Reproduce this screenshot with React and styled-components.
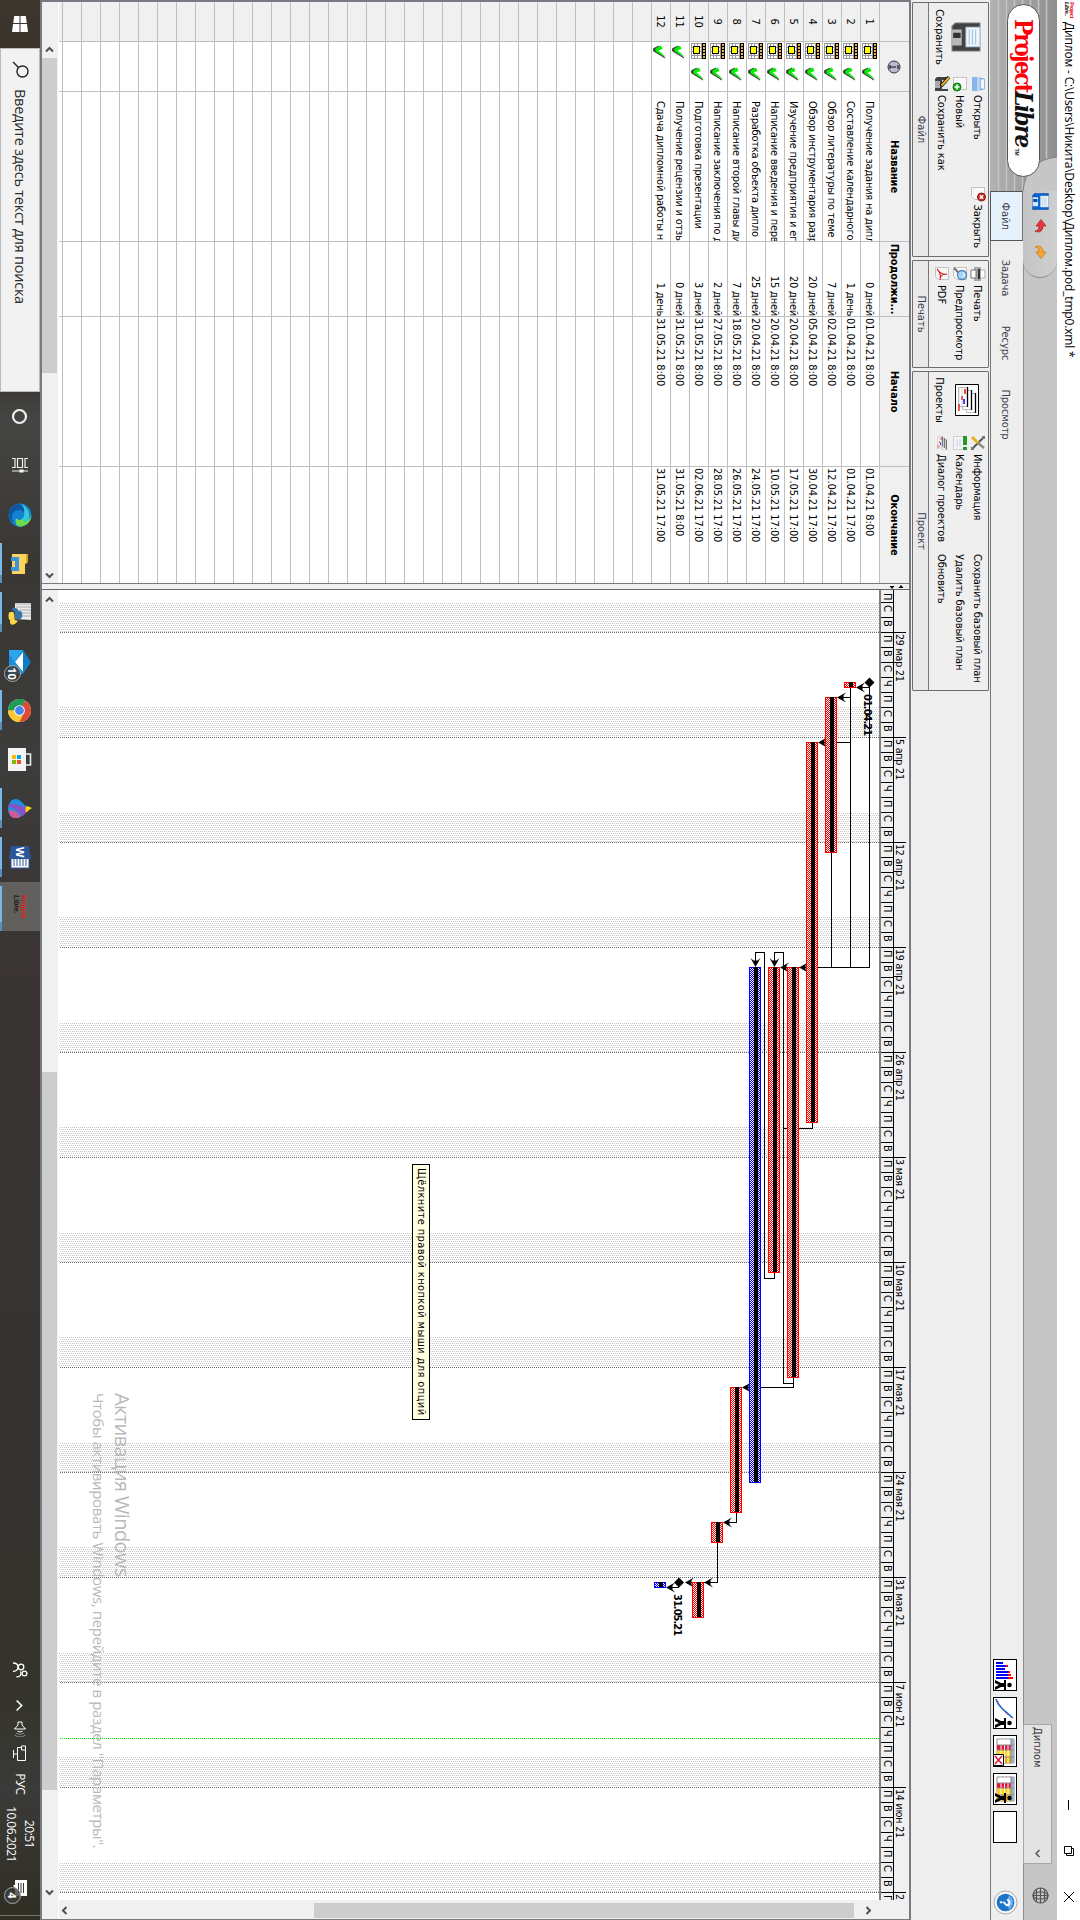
import React from "react";
import styled, { createGlobalStyle } from "styled-components";

const TAHOMA = '"DejaVu Sans Condensed", "DejaVu Sans", Tahoma, sans-serif';
const SEGOE = '"Open Sans", "Noto Sans", "Segoe UI", sans-serif';

const Global = createGlobalStyle`
  * { box-sizing: border-box; }
  html, body { margin: 0; padding: 0; background: #eeeeee; }
  svg { display: block; flex: none; }
`;

const Portrait = styled.div`
  width: 1080px;
  height: 1920px;
  overflow: hidden;
`;

const Desktop = styled.div`
  width: 1920px;
  height: 1080px;
  display: flex;
  flex-direction: column;
  overflow: hidden;
  background: #eeeeee;
  color: #000;
  font: 11px/13px ${TAHOMA};
  white-space: nowrap;
  transform-origin: 0 0;
  transform: translateX(1080px) rotate(90deg);
`;

/* ---------- window title ---------- */
const TitleBar = styled.header`
  height: 23px;
  flex: none;
  display: flex;
  align-items: center;
  padding: 0 18px 2px 2px;
  background: #fff;
`;
const TitleIcon = styled.div`
  width: 15px;
  margin-right: 5px;
  font: bold italic 5.5px/5px "Liberation Sans", sans-serif;
  letter-spacing: -0.4px;
  color: #111;
  b { color: #e00; display: block; font-style: normal; }
`;
const TitleText = styled.div`
  flex: 1;
  font: 12px/16px ${SEGOE};
  letter-spacing: -0.17px;
`;
const WindowButtons = styled.div`
  display: flex;
  gap: 36px;
  padding-top: 1px;
`;

/* ---------- header band ---------- */
const Band = styled.div`
  height: 67px;
  flex: none;
  display: flex;
`;
const LogoPanel = styled.div`
  width: 191px;
  height: 67px;
  position: relative;
  background: #c6c6c6;
`;
const LogoArt = styled.svg`
  position: absolute;
  inset: 0;
`;
const LogoPill = styled.div`
  position: absolute;
  left: 4px;
  top: 17px;
  width: 173px;
  height: 33px;
  display: flex;
  align-items: center;
  padding-left: 14px;
  border: 1px solid #555;
  border-radius: 17px;
  background: #fff;
  font: bold 24px/30px "DejaVu Serif Condensed", "DejaVu Serif", serif;
  letter-spacing: -2.05px;
  color: #111;
  b { color: #fb0207; }
  i { letter-spacing: -1.7px; }
  small { font: bold 5px/5px "Liberation Sans", sans-serif; letter-spacing: 0; align-self: flex-end; padding-bottom: 6px; margin-left: 2px; }
`;
const BandRight = styled.div`
  flex: 1;
  display: flex;
  flex-direction: column;
`;
const QuickBar = styled.div`
  height: 34px;
  display: flex;
  align-items: center;
  background: #c6c6c6;
  border-bottom: 1px solid #8d8d8d;
`;
const QuickPill = styled.div`
  width: 87px;
  height: 34px;
  display: flex;
  align-items: center;
  gap: 8px;
  padding-left: 2px;
  border-right: 1px solid #8a8a8a;
  border-radius: 0 17px 17px 0;
  background: linear-gradient(#cfcfcf, #c4c4c4);
`;
const Combo = styled.div`
  width: 140px;
  height: 29px;
  margin: 5px 23px 0 auto;
  padding: 0 5px 0 2px;
  display: flex;
  align-items: center;
  justify-content: space-between;
  border: 1px solid #a6a6ae;
  background: #e3e3e3;
  color: #333;
`;
const GlobeBox = styled.div`
  padding-right: 16px;
`;
const TabRow = styled.div`
  height: 33px;
  display: flex;
  align-items: center;
  background: #eeeeee;
  border-bottom: 1px solid #777;
`;
const Tab = styled.div`
  width: ${(p) => p.$w}px;
  height: 33px;
  display: flex;
  align-items: center;
  justify-content: center;
  padding-top: 2px;
  color: #3d4150;
  letter-spacing: -0.1px;
  border: 1px solid ${(p) => (p.$on ? "#555" : "transparent")};
  border-top-color: ${(p) => (p.$on ? "#777" : "transparent")};
  background: ${(p) => (p.$on ? "#e5f2fc" : "transparent")};
`;
const ViewButtons = styled.div`
  margin-left: auto;
  display: flex;
  align-items: center;
  gap: 6px;
  padding: 3px 5px 0 0;
`;
const ViewButton = styled.div`
  width: 32px;
  height: 24px;
  border: 1px solid #000;
  background: #fff;
`;
const HelpBox = styled.div`
  margin-left: 41px;
`;

/* ---------- ribbon ---------- */
const Ribbon = styled.div`
  height: 79px;
  flex: none;
  display: flex;
  gap: 3px;
  padding: 1px 0 1px 2px;
  background: #eeeeee;
`;
const Group = styled.section`
  width: ${(p) => p.$w}px;
  height: 77px;
  display: flex;
  flex-direction: column;
  border: 1px solid #6d6d6d;
  border-radius: 1px;
  background: #efefef;
`;
const GroupBody = styled.div`
  height: 60px;
  display: flex;
  padding-top: 1px;
  border-bottom: 1px solid #777;
`;
const GroupLabel = styled.div`
  flex: 1;
  text-align: center;
  line-height: 14px;
  color: #3d4150;
  background: #e9e9e9;
`;
const BigAction = styled.div`
  width: ${(p) => p.$w}px;
  display: flex;
  flex-direction: column;
  align-items: center;
  justify-content: space-between;
  padding: ${(p) => p.$top || 6}px 0 4px;
`;
const ActionColumn = styled.div`
  display: flex;
  flex-direction: column;
  margin-left: ${(p) => p.$ml || 0}px;
  letter-spacing: -0.1px;
`;
const Action = styled.div`
  height: 18px;
  display: flex;
  align-items: center;
  gap: 3px;
`;

/* ---------- workspace ---------- */
const Workspace = styled.main`
  height: 871px;
  flex: none;
  display: flex;
  border: solid #777a80;
  border-width: 2px 1px 2px 2px;
  background: #f0f0f0;
`;
const TablePane = styled.div`
  width: 582px;
  display: flex;
  flex-direction: column;
  border-right: 1px solid #777a80;
`;
const Splitter = styled.div`
  width: 6px;
  background: #f0f0f0;
  border-right: 1px solid #666;
`;
const Grid = styled.div`
  height: 850px;
  flex: none;
  overflow: hidden;
  background: #fff;
`;
const GridRow = styled.div`
  height: ${(p) => (p.$head ? 30 : 19)}px;
  display: grid;
  grid-template-columns: 40px 50px 150px 75px 150px 116px;
  font-weight: ${(p) => (p.$head ? "bold" : "normal")};
  text-align: ${(p) => (p.$head ? "center" : "left")};
  background: ${(p) => (p.$head ? "#f0f0f0" : "#fff")};
  letter-spacing: ${(p) => (p.$head ? "-0.15px" : "-0.1px")};
`;
const Cell = styled.div`
  overflow: hidden;
  border-right: 1px solid #bfbfbf;
  border-bottom: 1px solid #bfbfbf;
  line-height: ${(p) => (p.$head ? 29 : 18)}px;
  padding-top: ${(p) => (p.$head ? 0 : 1)}px;
  padding-left: ${(p) => p.$pl || 0}px;
  letter-spacing: ${(p) => (p.$tight ? "-0.22px" : "inherit")};
  text-align: ${(p) => p.$align || "inherit"};
  background: ${(p) => (p.$grey ? "#f0f0f0" : "transparent")};
  &:last-child { border-right: 0; }
`;
const Marks = styled(Cell)`
  display: flex;
  align-items: center;
  justify-content: ${(p) => (p.$head ? "center" : "flex-start")};
  gap: 8px;
`;
const HScroll = styled.div`
  height: 17px;
  flex: none;
  display: flex;
  align-items: center;
  background: #f0f0f0;
  border-top: 1px solid #fff;
`;
const Thumb = styled.div`
  width: ${(p) => p.$w}px;
  height: 15px;
  margin: 0 ${(p) => p.$mr}px 0 ${(p) => p.$ml}px;
  background: #cdcdcd;
`;
const GanttPane = styled.div`
  flex: 1;
  display: flex;
  flex-direction: column;
  background: #f0f0f0;
`;
const GanttTop = styled.div`
  height: 850px;
  display: flex;
`;
const GanttColumn = styled.div`
  width: 1312px;
  display: flex;
  flex-direction: column;
  position: relative;
`;
const Weeks = styled.div`
  height: 16px;
  display: flex;
  padding: 3px 0 0 42px;
  border-bottom: 1px solid #000;
  width: 1310px;
  overflow: hidden;
`;
const Week = styled.div`
  width: 105px;
  flex: none;
  padding-left: 1px;
  border-left: 1px solid #000;
  font-size: 10.5px;
  letter-spacing: -0.15px;
  line-height: 12px;
`;
const Days = styled.div`
  height: 14px;
  width: 1310px;
  display: flex;
  overflow: hidden;
  border-bottom: 2px solid #808080;
`;
const Day = styled.div`
  width: ${(p) => p.$w || 15}px;
  flex: none;
  border-left: 1px solid ${(p) => (p.$w ? "transparent" : "#000")};
  padding-left: 2px;
  font-size: 11px;
  line-height: 12px;
`;
const VScroll = styled.div`
  width: 16px;
  display: flex;
  flex-direction: column;
  align-items: center;
  padding-top: 36px;
`;
const VThumb = styled.div`
  width: 15px;
  height: 540px;
  margin: 10px 0 245px;
  background: #cdcdcd;
`;
const Tooltip = styled.div`
  position: absolute;
  left: 574px;
  top: 479px;
  width: 256px;
  height: 18px;
  padding: 0 3px;
  line-height: 16px;
  border: 1px solid #000;
  background: #ffffe1;
  letter-spacing: 0.4px;
`;
const Watermark = styled.div`
  position: absolute;
  left: 803px;
  top: 775px;
  color: #b9b9b9;
  font: 15px/22px ${SEGOE};
  letter-spacing: -0.37px;
  strong { display: block; font: 20px/24px ${SEGOE}; letter-spacing: -0.62px; }
`;

/* ---------- taskbar ---------- */
const Taskbar = styled.footer`
  height: 40px;
  flex: none;
  display: flex;
  align-items: stretch;
  color: #fff;
  background: linear-gradient(90deg, #3b352c 0, #393733 380px, #454543 420px, #3a3733 560px, #3c3c3b 760px, #3a3533 960px, #35322f 1500px, #35342b 1700px, #3a3a38 1790px, #302d23 1920px);
`;
const StartSlot = styled.div`
  width: 48px;
  display: grid;
  place-items: center;
`;
const SearchBox = styled.div`
  width: 344px;
  display: flex;
  align-items: center;
  gap: 11px;
  padding: 0 0 1px 12px;
  border: 1px solid #bcbcbc;
  background: #f2f2f2;
  color: #2b2b2b;
  font: 14.5px/20px ${SEGOE};
  letter-spacing: -0.26px;
`;
const TaskSlot = styled.div`
  width: 49px;
  display: flex;
  flex-direction: column;
  align-items: center;
  justify-content: center;
  position: relative;
  background: ${(p) => (p.$on ? "#62605d" : "transparent")};
  &::after {
    content: "";
    position: absolute;
    bottom: 0;
    left: 4px;
    right: ${(p) => (p.$on ? 0 : 5)}px;
    height: 2px;
    background: ${(p) => (p.$run ? "linear-gradient(90deg, #76b9ed 80%, #5b8fbb 80%)" : "none")};
  }
`;
const Badge = styled.div`
  position: absolute;
  left: ${(p) => p.$x}px;
  top: 19px;
  width: 17px;
  height: 17px;
  border: 1px solid #aaa;
  border-radius: 50%;
  background: #3b3b3bcc;
  font: bold 11px/15px ${SEGOE};
  text-align: center;
`;
const PLTask = styled.div`
  font: italic bold 7px/7px "Liberation Sans", sans-serif;
  color: #151515;
  letter-spacing: -0.1px;
  b { display: block; font-style: normal; color: #e31b10; }
`;
const Tray = styled.div`
  margin-left: auto;
  display: flex;
  align-items: center;
`;
const TrayItem = styled.div`
  width: ${(p) => p.$w}px;
  display: flex;
  justify-content: center;
  font: 12px/16px ${SEGOE};
  letter-spacing: -0.3px;
`;
const Clock = styled.div`
  width: 72px;
  text-align: center;
  font: 12px/18px ${SEGOE};
  letter-spacing: -0.55px;
  padding-bottom: 1px;
`;
const Notify = styled.div`
  width: 43px;
  height: 40px;
  margin-right: 4px;
  padding: 13px 0 0 7px;
  position: relative;
  border-right: 1px solid #77756f;
  margin-left: 3px;
`;

/* ---------- icons ---------- */
const Floppy = ({ s = 16, blue }) => (
  <svg width={s} height={s} viewBox="0 0 28 28">
    <path d="M1 1h26v26H4l-3-3z" fill={blue ? "#0a63cf" : "#424242"} stroke={blue ? "#0b4ba5" : "#777"} />
    <path d="M5 1h18v13H5z" fill="#eef6fd" stroke="#b9cfdf" />
    <path d="M7 5h14M7 8h14M7 11h14" stroke="#9fc0dc" />
    <path d="M7 18h15v9H7z" fill={blue ? "#d7e7fa" : "#b9b9b9"} />
    <path d="M10 19h5v7h-5z" fill={blue ? "#0a4ea8" : "#333"} />
  </svg>
);
const Page = ({ children }) => (
  <svg width="16" height="16" viewBox="0 0 16 16">
    <path d="M1.500 1.500h12v10l-3 3h-9z" fill="#f8f8f8" stroke="#c3c3c3" />
    {children}
  </svg>
);
const OpenIcon = () => (
  <svg width="16" height="16" viewBox="0 0 16 16">
    <path d="M2 3h12v10H2z" fill="#3f87dc" />
    <path d="M3 1.500h10v4H3z" fill="#f4f7fb" stroke="#9db9dc" />
    <path d="M1 6h14v8H1z" fill="#86b5ec" />
    <path d="M1 6h14v3H1z" fill="#b7d4f6" />
  </svg>
);
const NewIcon = () => (
  <Page><circle cx="11" cy="11" r="4" fill="#1ea51e" stroke="#0d7a12" /><path d="M11 8.500v5M8.500 11h5" stroke="#fff" strokeWidth="1.600" /></Page>
);
const CloseIcon = () => (
  <Page><circle cx="11" cy="4.500" r="4" fill="#c62d22" stroke="#8b1710" /><path d="M9.300 2.800l3.400 3.400M12.700 2.800l-3.400 3.400" stroke="#fff" strokeWidth="1.400" /></Page>
);
const SaveAsIcon = () => (
  <svg width="16" height="16" viewBox="0 0 16 16">
    <path d="M1 2h14v13H3l-2-2z" fill="#424242" /><path d="M4 2h9v6H4z" fill="#dfe6ec" /><path d="M5 10h7v5H5z" fill="#aaa" />
    <path d="M1 1l9 8" stroke="#111" strokeWidth="3.500" /><path d="M1.500 1l8 7.500" stroke="#f2b01f" strokeWidth="2" />
  </svg>
);
const PrintIcon = () => (
  <svg width="16" height="16" viewBox="0 0 16 16">
    <path d="M4 1h8v5H4z" fill="#fff" stroke="#aaa" /><path d="M1 5h14v7H1z" fill="#a5a5a5" /><path d="M3 6h10v2H3z" fill="#333" /><path d="M4 10h8v5H4z" fill="#fff" stroke="#777" />
  </svg>
);
const PreviewIcon = () => (
  <Page><path d="M7 9l-5 5" stroke="#777" strokeWidth="2.200" /><circle cx="9" cy="6" r="4.500" fill="#a9d3f4" stroke="#4a82b8" strokeWidth="1.300" /><path d="M6.500 5q2-3 5 0" stroke="#fff" fill="none" /></Page>
);
const PdfIcon = () => (
  <Page><path d="M3 13c4-3 6-7 5-10c0 5 3 7 6 7c-4-1-8 0-11 3z" fill="none" stroke="#d8222a" strokeWidth="1.100" /></Page>
);
const ToolsIcon = () => (
  <svg width="16" height="16" viewBox="0 0 16 16">
    <path d="M2 2l11 11" stroke="#555" strokeWidth="2" /><path d="M13 2L8 8" stroke="#8b8b8b" strokeWidth="2.400" /><path d="M8 8l-6 6" stroke="#e5b51c" strokeWidth="3" /><path d="M1 1h3v3H1zM12 12h3v3h-3z" fill="#777" />
  </svg>
);
const CalIcon = () => (
  <svg width="16" height="16" viewBox="0 0 16 16">
    <path d="M1.500 1.500h13v13h-13z" fill="#f3f5f8" stroke="#d0d0d0" /><path d="M1 1h14v4H1z" fill="#27962a" /><path d="M10 1h2v4h-2z" fill="#e6f5e6" /><path d="M4 8h8M4 11h8" stroke="#d5dbe4" strokeWidth="1.500" />
  </svg>
);
const ProjectsIcon = ({ w, h, frame }) => (
  <svg width={w} height={h} viewBox="0 0 32 24">
    <path d="M.5.500h31v23H.5z" fill={frame ? "#fff" : "none"} stroke={frame ? "#000" : "none"} />
    {[[9, 3], [6, 7], [3, 11]].map(([x, y]) => (
      <g key={x}>
        <path d={`M${x}.5 ${y}.5h19v9h-19z`} fill="#fff" stroke="#bbb" />
        <path d={`M${x} ${y}.5h20`} stroke="#000" strokeWidth="1.300" />
      </g>
    ))}
    <path d="M5 14h5M12 17h4" stroke="#e00" strokeWidth="1.500" /><path d="M15 15h5" stroke="#00e" strokeWidth="1.500" /><path d="M20 20h7" stroke="#e00" strokeWidth="1.300" />
    <path d="M4 17h20M4 20h16" stroke="#bbb" strokeWidth=".6" />
  </svg>
);
const CurlSvg = styled.svg`
  transform: ${(p) => (p.$flip ? "scaleX(-1)" : "none")};
`;
const Curl = ({ color, edge, flip }) => (
  <CurlSvg $flip={flip} width="17" height="17" viewBox="0 0 17 17">
    <path d="M1.500 8l6.500-5v3c6 .5 7 4 5 8c0-3-2-4-5-4v3z" fill={color} stroke={edge} strokeWidth=".8" />
  </CurlSvg>
);
const Globe = () => (
  <svg width="17" height="17" viewBox="0 0 17 17" fill="none" stroke="#555" strokeWidth="1.200">
    <circle cx="8.500" cy="8.500" r="7.500" /><ellipse cx="8.500" cy="8.500" rx="3.500" ry="7.500" /><path d="M8.500 1v15M1 8.500h15M2.500 4.500h12M2.500 12.500h12" />
  </svg>
);
const Chevron = ({ d = "down", s = 9, c = "#505050", w = 2 }) => {
  const r = { down: 0, left: 90, up: 180, right: 270 }[d];
  return (
    <svg width={s} height={s} viewBox="0 0 9 9">
      <path transform={`rotate(${r} 4.500 4.500)`} d="M1 2.500l3.500 3.500L8 2.500" fill="none" stroke={c} strokeWidth={w} />
    </svg>
  );
};
const Person = ({ x }) => (
  <g transform={`translate(${x} 4)`}><circle cx="3" cy="2.500" r="2.300" /><path d="M-2 6h10v2L5 8v3L8 17H5l-2-4-2 4h-3l3-6V8L-2 8z" /></g>
);
const TableArt = ({ off }) => (
  <g>
    <path d="M3 2h24v17H3z" fill="#fff" stroke="#888" />
    <path d="M3 2h24v3H3z" fill="#9db4cf" />
    <path d="M9 5h5v14H9z" fill="#e3173e" /><path d="M14 5h7v14h-7z" fill="#ffd21a" /><path d="M21 5h6v14h-6z" fill="#f4a800" />
    <path d="M3 8h24M3 11.500h24M3 15h24" stroke="#fff" strokeWidth="1" /><path d="M3 5h24M9 2v17M14 2v17M21 2v17" stroke="#888" />
    {off ? <g><path d="M18.500 12.500h11v10h-11z" fill="#fff" stroke="#000" /><path d="M20 14l8 7M28 14l-8 7" stroke="#e3173e" strokeWidth="1.500" /></g> : <Person x={21} />}
  </g>
);
const InfoIcon = () => (
  <svg width="14" height="14" viewBox="0 0 14 14"><circle cx="7" cy="7" r="6" fill="#b9b9cf" stroke="#333" /><path d="M5 3h4M5 11h4M7 5v6" stroke="#444" strokeWidth="1.600" /></svg>
);
const ConstraintIcon = () => (
  <svg width="16" height="15" viewBox="0 0 16 15" shapeRendering="crispEdges">
    <path d="M0 0h16v15H0z" fill="#fff" />
    <path d="M0 4.500h16M0 8.500h16M0 11.500h16M0 14.500h16M.5 0v15M4.500 0v15M8.500 0v15M12.500 0v15M15.500 0v15" stroke="#999" />
    <path d="M0 0h16v4H0z" fill="#000" /><path d="M1 1h2v2H1zM4 1h2v2H4zM7 1h2v2H7zM10 1h2v2h-2zM13 1h2v2h-2z" fill="#f5b04a" />
    <path d="M3 6h8v7H3z" fill="#000" /><path d="M4 7h6v5H4z" fill="#ffff00" />
  </svg>
);
const CheckIcon = () => (
  <svg width="14" height="14" viewBox="0 0 14 14">
    <path d="M1 8l2 1 1.500 3L13 2 6 13.500H3.500z" fill="#333" stroke="#555" />
    <path d="M.5 6L4 4.500l1.500 4L12.500.5 6.500 11.500H3.500z" fill="#00f000" />
  </svg>
);

/* ---------- data ---------- */
const tasks = [
  ["Получение задания на дипл", "0 дней", "01.04.21 8:00", "01.04.21 8:00"],
  ["Составление календарного", "1 день", "01.04.21 8:00", "01.04.21 17:00"],
  ["Обзор литературы по теме", "7 дней", "02.04.21 8:00", "12.04.21 17:00"],
  ["Обзор инструментария разр", "20 дней", "05.04.21 8:00", "30.04.21 17:00"],
  ["Изучение предприятия и ег", "20 дней", "20.04.21 8:00", "17.05.21 17:00"],
  ["Написание введения и перв", "15 дней", "20.04.21 8:00", "10.05.21 17:00"],
  ["Разработка объекта дипло", "25 дней", "20.04.21 8:00", "24.05.21 17:00"],
  ["Написание второй главы ди", "7 дней", "18.05.21 8:00", "26.05.21 17:00"],
  ["Написание заключения по д", "2 дней", "27.05.21 8:00", "28.05.21 17:00"],
  ["Подготовка презентации", "3 дней", "31.05.21 8:00", "02.06.21 17:00"],
  ["Получение рецензии и отзы", "0 дней", "31.05.21 8:00", "31.05.21 8:00"],
  ["Сдача дипломной работы н", "1 день", "31.05.21 8:00", "31.05.21 17:00"],
];
const weeks = ["29 мар 21", "5 апр 21", "12 апр 21", "19 апр 21", "26 апр 21", "3 мая 21", "10 мая 21", "17 мая 21", "24 мая 21", "31 мая 21", "7 июн 21", "14 июн 21", "2"];
const dayNames = ["П", "В", "С", "Ч", "П", "С", "В"];
const bars = [
  [2, 682, 688], [3, 697, 853], [4, 742, 1123], [5, 967, 1378], [6, 967, 1273], [7, 967, 1483, 1],
  [8, 1387, 1513], [9, 1522, 1543], [10, 1582, 1618], [12, 1582, 1588, 1],
];
const links = [
  "M682 210.500H967.500V299", "M687.500 210V220", "M688 229.500H967", "M697.500 229V240", "M742.500 229V258", "M853 248.500H967",
  "M1123 267.500H1128.500V296", "M1378 286.500H1383.500V296.500H952.500V305.500H962", "M1383 286.500H1387.500V334",
  "M1273 305.500H1278.500V315.500H952.500V324.500H962", "M1513 343.500H1522.500V353", "M1543 362.500H1582.500V392", "M1582 401.500H1587.500V411",
];
const arrows = [[687.5, 224], [697.5, 243], [742.5, 262], [967.5, 281], [967.5, 300], [967, 305.5, 1], [967, 324.5, 1], [1387.5, 338], [1522.5, 357], [1582.5, 376], [1582.5, 395], [1587.5, 414]];

function Chart() {
  const weekLines = weeks.map((_, i) => 632 + i * 105);
  return (
    <svg width="1312" height="820" viewBox="590 201 1312 820" shapeRendering="crispEdges">
      <defs>
        <pattern id="wk" width="4" height="2" patternUnits="userSpaceOnUse" x="603" y="201">
          <path d="M0 0h1v1H0zM2 1h1v1H2z" fill="#c6c6c6" />
        </pattern>
        <pattern id="red" width="2" height="2" patternUnits="userSpaceOnUse"><rect width="2" height="2" fill="#fff" /><path d="M0 0h1v1H0zM1 1h1v1H1z" fill="#f00" /></pattern>
        <pattern id="blue" width="2" height="2" patternUnits="userSpaceOnUse"><rect width="2" height="2" fill="#fff" /><path d="M0 0h1v1H0zM1 1h1v1H1z" fill="#00f" /></pattern>
      </defs>
      <rect x="590" y="201" width="1310" height="820" fill="#fff" />
      {weekLines.map((x, i) => (
        <g key={x}>
          <rect x={x - (i % 2 ? 30 : 29)} y="201" width={i % 2 ? 30 : 29} height="820" fill="url(#wk)" />
          <path d={`M${x + 0.5} 201v820`} stroke="#6a6a6a" strokeDasharray="1 1" />
        </g>
      ))}
      <path d="M1738.500 201v820" stroke="#00f000" strokeDasharray="1 1" />
      {links.map((d) => <path key={d} d={d} fill="none" stroke="#000" />)}
      {arrows.map(([x, y, r]) => (
        <path key={x + "," + y} transform={`translate(${x} ${y}) rotate(${r ? -90 : 0})`} d="M0 0L-5-9-2-6.500H2L5-9z" shapeRendering="auto" />
      ))}
      {bars.map(([row, a, b, blue]) => {
        const y = 205 + (row - 1) * 19;
        return (
          <g key={row}>
            <rect x={a + 0.5} y={y + 0.5} width={b - a - 1} height="11" fill={`url(#${blue ? "blue" : "red"})`} stroke={blue ? "#00f" : "#f00"} />
            <rect x={a} y={y + 3} width={b - a - 1} height="4" />
          </g>
        );
      })}
      <path d="M682.500 205.500l5 5-5 5-5-5zM1582.500 396l5 5-5 5-5-5z" shapeRendering="auto" />
      <g fontFamily={TAHOMA} fontSize="11" fontWeight="bold" letterSpacing="-.95">
        <text x="694" y="216">01.04.21</text>
        <text x="1594" y="406">31.05.21</text>
      </g>
    </svg>
  );
}

/* ---------- taskbar icons ---------- */
const Edge = () => (
  <svg width="24" height="24" viewBox="0 0 24 24">
    <circle cx="12" cy="12" r="11.500" fill="#1580d0" />
    <path d="M1 11C3 2 20-2 23.500 11c.5 5-4 6-8 5c4-5-1-9-6-8C5 8 1 9 1 11z" fill="#35c6d8" />
    <path d="M12 .5C18 .5 23 5 23.500 11c.3 5-4 6-8 5c2-3 2-5 0-7c5 0 4-6-3.500-8.500z" fill="#6bdd4c" />
    <path d="M7 13c0 6 6 9 13 6-5 7-18 5-19-5 1-5 5-7 9-6-2 1-3 3-3 5z" fill="#0d56a4" />
  </svg>
);
const Folder = () => (
  <svg width="20" height="18" viewBox="0 0 20 18"><path d="M0 1h8l2 3h10v13H0z" fill="#fbd35f" /><path d="M0 1h8l2 2H0z" fill="#e0a015" /><path d="M3 10h14v8h-4v-4H7v4H3z" fill="#3a93dc" /></svg>
);
const Python = () => (
  <svg width="24" height="24" viewBox="0 0 24 24"><path d="M2 1h17l-1 16H2z" fill="#ececec" /><path d="M3 1v16M6 1v15M9 1v15M12 1v15M15 1v15" stroke="#999" strokeWidth=".8" /><path d="M10 12c0-3 8-3 8 0v5h-6c-3 0-2 4-4 3s-2-6 2-6z" fill="#3573a8" /><path d="M23 17c2 5-1 5-4 5 0 2-8 2-8 0v-3c1-2 6-1 8-2l1-3z" fill="#ffd545" /></svg>
);
const Mail = () => (
  <svg width="24" height="23" viewBox="0 0 24 23"><path d="M0 8L12 0l12 8v14H0z" fill="#0f7bcb" /><path d="M2 8h20l-10 8z" fill="#fff" /><path d="M0 8l14 10 10 4H0z" fill="#2ba5ee" /><path d="M24 8v14H4z" fill="#1a8fe0" /></svg>
);
const Chrome = () => (
  <svg width="23" height="23" viewBox="0 0 24 24"><circle cx="12" cy="12" r="12" fill="#fbc935" /><path d="M12 12L1.600 6A12 12 0 0 1 22.400 6z" fill="#de4b3b" /><path d="M12 12L1.600 6A12 12 0 0 0 12 24z" fill="#23995a" /><path d="M12 12h12A12 12 0 0 1 12 24z" fill="#fbc935" /><path d="M12 6h10.400A12 12 0 0 1 24 12z" fill="#de4b3b" /><circle cx="12" cy="12" r="5.500" fill="#fff" /><circle cx="12" cy="12" r="4.600" fill="#4587f3" /></svg>
);
const Store = () => (
  <svg width="23" height="24" viewBox="0 0 23 24"><path d="M6 8V1.500h11V8" fill="none" stroke="#eee" strokeWidth="1.600" /><path d="M0 6h23v18H0z" fill="#f4f4f4" /><path d="M12 11h4v4h-4z" fill="#f25022" /><path d="M7 11h4v4H7z" fill="#00a4ef" /><path d="M7 16h4v4H7z" fill="#ffb900" /><path d="M12 16h4v4h-4z" fill="#7fba00" /></svg>
);
const Paint = () => (
  <svg width="19" height="24" viewBox="0 0 19 24"><path d="M9 0c2 5 10 9 10 16 0 5-4 8-9 8s-10-3-10-8C0 10 9 8 9 0z" fill="#1f8fe0" /><path d="M9 0c2 5 6 6 8 10-4 4-7 4-9 13H5C4 15 9 10 9 0z" fill="#8b52c8" /><path d="M9 2c2 4 7 6 9 10-5 1-6 5-7 11 8 0 9-6 8-9C17 9 10 6 9 0z" fill="#f0508c" opacity=".85" /><path d="M9 0c2 4 5 5 4 6-2 1-6 0-6-1z" fill="#ffd800" /></svg>
);
const WordIcon = () => (
  <svg width="24" height="22" viewBox="0 0 24 22"><path d="M11 2h11v18H11z" fill="#fff" stroke="#2b579a" /><path d="M13 5h7M13 8h7M13 11h7M13 14h7M13 17h7" stroke="#2b579a" /><path d="M0 2l13-2v22L0 20z" fill="#2a5699" /><text x="1" y="15" fontSize="11" fontWeight="bold" fill="#fff" fontFamily="Liberation Sans">W</text></svg>
);

export default function App() {
  return (
    <Portrait>
      <Global />
      <Desktop>
        <TitleBar>
          <TitleIcon><b>Project</b>Libre..</TitleIcon>
          <TitleText>Диплом - C:\Users\Никита\Desktop\Диплом.pod_tmp0.xml *</TitleText>
          <WindowButtons>
            <svg width="10" height="10"><path d="M0 5.500h10" stroke="#000" /></svg>
            <svg width="10" height="10" fill="none" stroke="#000"><path d="M.5 2.500h7v7h-7zM2.500 2.500v-2h7v7h-2" /></svg>
            <svg width="10" height="10"><path d="M0 0l10 10M10 0L0 10" stroke="#000" /></svg>
          </WindowButtons>
        </TitleBar>

        <Band>
          <LogoPanel>
            <LogoArt width="191" height="67">
              <defs><linearGradient id="lg" x1="0" y1="0" x2="0" y2="1"><stop offset="0" stopColor="#8f8f8f" /><stop offset="1" stopColor="#b2b2b2" /></linearGradient></defs>
              <path d="M0 0H157Q160 31 191 34V67H0z" fill="url(#lg)" />
              <path d="M0 10.500H159M0 18.500H166M0 26.500H176M0 34.500H191M0 42.500H191M0 50.500H191M0 58.500H191" stroke="#c4c4c4" strokeWidth="1.500" />
              <path d="M157 0Q160 31 191 34" fill="none" stroke="#808080" />
            </LogoArt>
            <LogoPill><b>Project</b><i>Libre</i><small>TM</small></LogoPill>
          </LogoPanel>
          <BandRight>
            <QuickBar>
              <QuickPill>
                <Floppy blue s={17} /><Curl color="#e2383f" edge="#b32026" /><Curl flip color="#f7a531" edge="#cc7b12" />
              </QuickPill>
              <Combo>Диплом<Chevron w={1.4} /></Combo>
              <GlobeBox><Globe /></GlobeBox>
            </QuickBar>
            <TabRow>
              <Tab $on $w={50}>Файл</Tab><Tab $w={74}>Задача</Tab><Tab $w={56}>Ресурс</Tab><Tab $w={87}>Просмотр</Tab>
              <ViewButtons>
                <ViewButton><svg width="30" height="22"><path d="M3 20v-7M6 20v-10M9 20v-9M12 20V8M15 20V6M18 20V8" stroke="#00f" strokeWidth="2" /><path d="M6 10V8M12 8V6M15 8V5M18 8V3" stroke="#f00" strokeWidth="2" /><Person x={22} /></svg></ViewButton>
                <ViewButton><svg width="30" height="22"><path d="M1 20Q12 15 20 3" fill="none" stroke="#e22" strokeWidth="1.400" /><path d="M1 20C10 19 13 8 20 4" fill="none" stroke="#08f" strokeWidth="1.400" /><Person x={22} /></svg></ViewButton>
                <ViewButton><svg width="30" height="22"><TableArt off /></svg></ViewButton>
                <ViewButton><svg width="30" height="22"><TableArt /></svg></ViewButton>
                <ViewButton />
                <HelpBox>
                  <svg width="25" height="25" viewBox="0 0 25 25"><circle cx="12.500" cy="12.500" r="11.500" fill="#f5f5f5" stroke="#aaa" /><circle cx="12.500" cy="12.500" r="8.800" fill="#1d73c9" /><path d="M5 9q7-8 15 0-7 3-15 0z" fill="#6fb1ee" /><text x="12.500" y="18" textAnchor="middle" fontSize="15" fontWeight="bold" fill="#fff" fontFamily="Liberation Sans">?</text></svg>
                </HelpBox>
              </ViewButtons>
            </TabRow>
          </BandRight>
        </Band>

        <Ribbon>
          <Group $w={255}>
            <GroupBody>
              <BigAction $w={68}><Floppy s={30} />Сохранить</BigAction>
              <ActionColumn $ml={5}>
                <Action><OpenIcon />Открыть</Action><Action><NewIcon />Новый</Action><Action><SaveAsIcon />Сохранить как</Action>
              </ActionColumn>
              <ActionColumn $ml={15}><Action><CloseIcon />Закрыть</Action></ActionColumn>
            </GroupBody>
            <GroupLabel>Файл</GroupLabel>
          </Group>
          <Group $w={108}>
            <GroupBody>
              <ActionColumn $ml={5}>
                <Action><PrintIcon />Печать</Action><Action><PreviewIcon />Предпросмотр</Action><Action><PdfIcon />PDF</Action>
              </ActionColumn>
            </GroupBody>
            <GroupLabel>Печать</GroupLabel>
          </Group>
          <Group $w={320}>
            <GroupBody>
              <BigAction $w={56} $top={8}><ProjectsIcon w={32} h={24} frame />Проекты</BigAction>
              <ActionColumn $ml={7}>
                <Action><ToolsIcon />Информация</Action><Action><CalIcon />Календарь</Action><Action><ProjectsIcon w={16} h={14} />Диалог проектов</Action>
              </ActionColumn>
              <ActionColumn $ml={12}>
                <Action>Сохранить базовый план</Action><Action>Удалить базовый план</Action><Action>Обновить</Action>
              </ActionColumn>
            </GroupBody>
            <GroupLabel>Проект</GroupLabel>
          </Group>
        </Ribbon>

        <Workspace>
          <TablePane>
            <Grid>
              <GridRow $head>
                <Cell $head /><Marks $head><InfoIcon /></Marks><Cell $head>Название</Cell><Cell $head>Продолжи...</Cell><Cell $head>Начало</Cell><Cell $head>Окончание</Cell>
              </GridRow>
              {Array.from({ length: 44 }, (_, i) => {
                const t = tasks[i];
                return (
                  <GridRow key={i}>
                    <Cell $grey $align="center">{t ? i + 1 : ""}</Cell>
                    <Marks $pl={i < 10 ? 1 : 3}>{t && i < 10 && <ConstraintIcon />}{t && <CheckIcon />}</Marks>
                    <Cell $tight $pl={9}>{t && t[0]}</Cell>
                    <Cell $tight $align="right">{t && t[1]}</Cell>
                    <Cell $pl={1}>{t && t[2]}</Cell>
                    <Cell $pl={1}>{t && t[3]}</Cell>
                  </GridRow>
                );
              })}
            </Grid>
            <HScroll><Thumb as="span" $w={0} $ml={43} $mr={0} /><Chevron d="left" /><Thumb $w={315} $ml={4} $mr={198} /><Chevron d="right" /></HScroll>
          </TablePane>
          <Splitter><svg width="5" height="24"><path d="M1 8L4 5.500V10.500zM5 17L2 14.500V19.500z" /></svg></Splitter>
          <GanttPane>
            <GanttTop>
              <GanttColumn>
                <Weeks>{weeks.map((w) => <Week key={w}>{w}</Week>)}</Weeks>
                <Days>
                  <Day $w={12}>П</Day><Day>С</Day><Day>В</Day>
                  {weeks.slice(0, 12).flatMap((w) => dayNames.map((d, i) => <Day key={w + i}>{d}</Day>))}
                  <Day>П</Day>
                </Days>
                <Chart />
                <Tooltip>Щёлкните правой кнопкой мыши для опций</Tooltip>
                <Watermark><strong>Активация Windows</strong>Чтобы активировать Windows, перейдите в раздел "Параметры".</Watermark>
              </GanttColumn>
              <VScroll><Chevron d="up" /><VThumb /><Chevron /></VScroll>
            </GanttTop>
            <HScroll><Thumb as="span" $w={0} $ml={5} $mr={0} /><Chevron d="left" /><Thumb $w={718} $ml={468} $mr={98} /><Chevron d="right" /></HScroll>
          </GanttPane>
        </Workspace>

        <Taskbar>
          <StartSlot><svg width="16" height="16"><path d="M0 2.200L7 1.200V7.500H0zM8 1L16 0V7.500H8zM0 8.500H7V14.800L0 13.800zM8 8.500H16V16L8 15z" fill="#fff" /></svg></StartSlot>
          <SearchBox>
            <svg width="17" height="17" fill="none" stroke="#222" strokeWidth="1.400"><circle cx="10.500" cy="6.500" r="5.500" /><path d="M6.500 10.500L1 16" /></svg>
            Введите здесь текст для поиска
          </SearchBox>
          <TaskSlot><svg width="17" height="17"><circle cx="8.500" cy="8.500" r="6.500" fill="none" stroke="#eee" strokeWidth="2.200" /></svg></TaskSlot>
          <TaskSlot><svg width="17" height="16" fill="none" stroke="#eee" strokeWidth="1.200"><path d="M1.500 0v3h9V0M1.500 16v-3h9v3M1.500 5.500h9v5h-9zM14 0v16" /><path d="M13 5h2v3h-2z" fill="#fff" /></svg></TaskSlot>
          <TaskSlot><Edge /></TaskSlot>
          <TaskSlot $run><Folder /></TaskSlot>
          <TaskSlot $run><Python /></TaskSlot>
          <TaskSlot><Mail /><Badge $x={28}>10</Badge></TaskSlot>
          <TaskSlot $run><Chrome /></TaskSlot>
          <TaskSlot><Store /></TaskSlot>
          <TaskSlot $run><Paint /></TaskSlot>
          <TaskSlot $run><WordIcon /></TaskSlot>
          <TaskSlot $run $on><PLTask><b>Project</b>Libre.</PLTask></TaskSlot>
          <Tray>
            <TrayItem $w={36}><svg width="16" height="16" fill="none" stroke="#fff" strokeWidth="1.300"><circle cx="5" cy="7" r="2.800" /><circle cx="11.500" cy="3.500" r="2.400" /><path d="M1 15q0-5 4-5t4.500 5M9.500 7.500q5-2 5.500 4" /></svg></TrayItem>
            <TrayItem $w={34}><Chevron d="up" s={13} c="#fff" w={1.1} /></TrayItem>
            <TrayItem $w={14}><svg width="16" height="14" fill="none" stroke="#fff"><path d="M1 5h3l4-3.500v11L4 9H1zM10 4.500q2 2.500 0 5" /><path d="M12 3q3 4 0 8M14 1.500q4 5.500 0 11" stroke="#888" /></svg></TrayItem>
            <TrayItem $w={34}><svg width="16" height="14" fill="none" stroke="#fff"><path d="M5 1.500h10.500v8H2.500V6M1 1.500h4v4H1zM9 10v3M5 13.500h8" /></svg></TrayItem>
            <TrayItem $w={28}>РУС</TrayItem>
            <Clock>20:51<br />10.06.2021</Clock>
            <Notify><svg width="16" height="14"><path d="M0 0h16v12H8l-3 2v-2H0z" fill="#fff" /><path d="M3 3.500h10M3 6h10M3 8.500h10" stroke="#333" /></svg><Badge $x={14}>4</Badge></Notify>
          </Tray>
        </Taskbar>
      </Desktop>
    </Portrait>
  );
}
